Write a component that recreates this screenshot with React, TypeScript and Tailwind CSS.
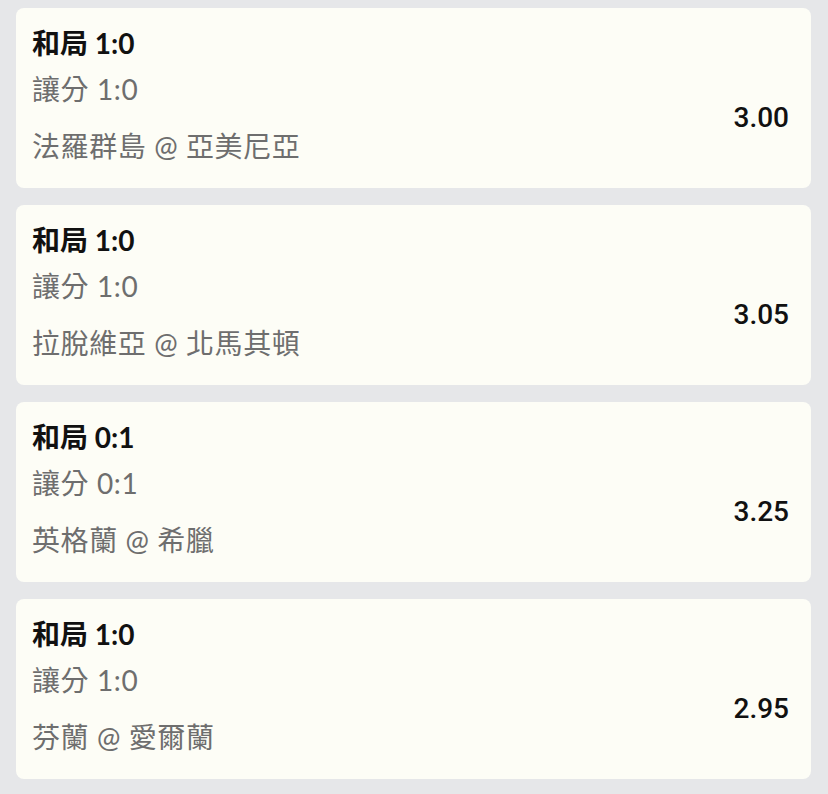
import React from "react";

const items = [
  { title: "和局 1:0", sub: "讓分 1:0", match: "法羅群島 @ 亞美尼亞", odds: "3.00" },
  { title: "和局 1:0", sub: "讓分 1:0", match: "拉脫維亞 @ 北馬其頓", odds: "3.05" },
  { title: "和局 0:1", sub: "讓分 0:1", match: "英格蘭 @ 希臘", odds: "3.25" },
  { title: "和局 1:0", sub: "讓分 1:0", match: "芬蘭 @ 愛爾蘭", odds: "2.95" },
];

export default function App() {
  return (
    <div
      className="min-h-[794px] w-[828px] bg-[#e6e7e9] pt-[8px] pb-[16px] pl-[16px] pr-[17px] flex flex-col gap-[17px]"
      style={{ fontFamily: 'Lato, "Noto Sans CJK TC", sans-serif' }}
    >
      {items.map((it, i) => (
        <div key={i} className="h-[180px] rounded-lg bg-[#fdfdf6] pl-[16px] pr-[22px] pt-[15px] flex flex-col">
          <div className="text-[28px] leading-[40px] font-bold text-[#111111]">{it.title}</div>
          <div className="flex items-center mt-[6px]">
            <div className="flex-1 flex flex-col text-[28px] leading-[40px] tracking-[0.6px] text-[#6e6e6e]">
              <div>{it.sub}</div>
              <div className="mt-[17px]">{it.match}</div>
            </div>
            <div
              className="text-[28px] leading-[40px] font-medium text-[#111111] mt-px"
              style={{ fontFamily: 'Roboto, "Liberation Sans", sans-serif' }}
            >
              {it.odds}
            </div>
          </div>
        </div>
      ))}
    </div>
  );
}
